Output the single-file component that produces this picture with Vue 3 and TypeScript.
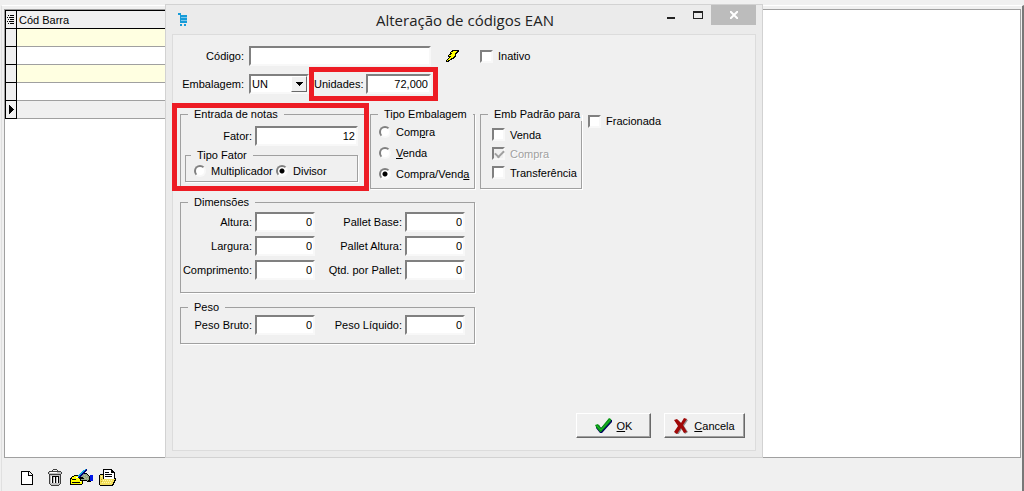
<script setup lang="ts">
import { ref } from 'vue'

const rows = [0, 1, 2, 3, 4]
const codigo = ref('')
const embalagem = ref('UN')
const unidades = ref('72,000')
const fator = ref('12')
const tipoFator = ref('divisor')
const tipoEmbalagem = ref('ambos')
const inativo = ref(false)
const fracionada = ref(false)
const padraoVenda = ref(false)
const padraoCompra = ref(true)
const padraoTransferencia = ref(false)

const dimensoes = ref([
  { id: 'altura', label: 'Altura:', value: '0' },
  { id: 'pallet-base', label: 'Pallet Base:', value: '0' },
  { id: 'largura', label: 'Largura:', value: '0' },
  { id: 'pallet-altura', label: 'Pallet Altura:', value: '0' },
  { id: 'comprimento', label: 'Comprimento:', value: '0' },
  { id: 'qtd-pallet', label: 'Qtd. por Pallet:', value: '0' },
])
const pesos = ref([
  { id: 'peso-bruto', label: 'Peso Bruto:', value: '0' },
  { id: 'peso-liquido', label: 'Peso Líquido:', value: '0' },
])
</script>

<template>
  <main class="screen">
    <section class="panel">
      <div class="grid-box">
        <table class="grid">
          <thead>
            <tr>
              <th class="marker">
                <svg width="10" height="12" viewBox="0 0 10 12" aria-hidden="true" shape-rendering="crispEdges">
                  <path fill="#000" d="M2 1h1v1H2zM4 1h4v1H4zM1 3h1v1H1zM3 3h5v1H3zM2 5h1v1H2zM4 5h4v1H4zM1 7h1v1H1zM3 7h5v1H3zM2 9h1v1H2zM4 9h4v1H4z" />
                </svg>
              </th>
              <th class="head">Cód Barra</th>
            </tr>
          </thead>
          <tbody>
            <tr v-for="r in rows" :key="r" :class="{ odd: r % 2 === 0, current: r === 4 }">
              <td class="marker">
                <svg v-if="r === 4" width="10" height="10" viewBox="0 0 10 10" aria-hidden="true" shape-rendering="crispEdges">
                  <path fill="#000" d="M3 0h1v1h1v1h1v1h1v1h1v1H7v1H6v1H5v1H4v1H3z" />
                </svg>
              </td>
              <td class="data"></td>
            </tr>
          </tbody>
        </table>
      </div>
      <nav class="toolbar">
        <button type="button" class="tool" aria-label="Novo">
          <svg width="12" height="14" viewBox="0 0 12 14" shape-rendering="crispEdges">
            <path fill="#fff" d="M1 1h7v3h3v9H1z" />
            <path fill="#000" d="M0 0h8v1H1v12h10V5H7V1h1v3h3V3h-1V2H9V1H8V0h1v1h1v1h1v1h1v11H0z" />
          </svg>
        </button>
        <button type="button" class="tool trash" aria-label="Excluir">
          <svg width="14" height="17" viewBox="0 0 14 17" shape-rendering="crispEdges">
            <path fill="#c0c0c0" d="M1 3h12v2H1zM2 6h10v10H2z" />
            <path fill="#404040" d="M5 0h4v1H5zM4 1h1v1H4zM9 1h1v1H9zM1 2h12v1H1zM0 3h1v2H0zM13 3h1v2h-1zM1 5h12v1H1zM1 6h1v9H1zM12 6h1v9h-1zM2 15h1v1H2zM11 15h1v1h-1zM3 16h8v1H3z" />
            <path fill="#000" d="M4 8h1v6H4zM7 8h1v6H7zM10 8h1v6h-1zM4 7h7v1H4z" />
            <path fill="#fff" d="M2 3h7v1H2zM3 7h1v7H3zM6 8h1v6H6zM9 8h1v6H9z" />
          </svg>
        </button>
        <button type="button" class="tool edit" aria-label="Alterar">
          <svg width="23" height="17" viewBox="0 0 23 17" shape-rendering="crispEdges">
            <path fill="#000" d="M4 6h10v6h-1v3h-1v1H0V9h1V8h1V7h2z" />
            <path fill="#ffff00" d="M4 7h8v4h1v1h-1v3H1v-5h1V8h2z" />
            <path fill="#000" d="M2 10h4v1H2zM2 13h8v1H2z" />
            <path fill="#fff" d="M6 8h3v1H6zM10 12h1v1h-1z" />
            <path fill="#000" d="M12 4h5v1h1v1h1v1h2v6h-4v-1h-7v-2H9V8h1V7h1V6h1z" />
            <path fill="#93a58a" d="M13 5h4v1h1v1h1v1h1v3h-2v1h-1v-1h-6v-1h3V9h-1V8h-2V7h1V6h1z" />
            <path fill="#b9c58e" d="M14 6h1v1h-1zM16 7h1v1h-1zM15 9h1v1h-1zM17 9h1v1h-1zM14 8h1v1h-1z" />
            <path fill="#000" d="M19 7h1v1h1v5h-1v-1h-1z" />
            <path fill="#0018e8" d="M20 6h3v6h-3z" />
            <path fill="#18a8e0" d="M15 0h1v1h-1v1h-1v1h-1v1h-1v1h-1v1h-1v1H9v1H8V6h1V5h1V4h1V3h1V2h1V1h2z" />
            <path fill="#000080" d="M16 0h1v2h-1v1h-1v1h-1v1h-1v1h-1v1h-1v1h-1v1H8V8h1V7h1V6h1V5h1V4h1V3h1V2h1V1h1z" />
          </svg>
        </button>
        <button type="button" class="tool open" aria-label="Abrir">
          <svg width="17" height="17" viewBox="0 0 17 17" shape-rendering="crispEdges">
            <path fill="#000" d="M4 0h9v1h1v1h1v1h1v6h1v3h-1v2h-1v2h-1v1H1v-1H0V6h1V5h3z" />
            <path fill="#fff" d="M5 1h7v3h3v6H5z" />
            <path fill="#000" d="M6 3h4v1H6zM6 5h7v1H6zM6 7h7v1H6zM12 1h1v2h2v1h-3z" />
            <path fill="#f3df5c" d="M1 6h3v4h12v1h-1v2h-1v2h-1v1H1z" />
            <path fill="#c8a820" d="M2 10h1v1H2zM2 12h1v1H2z" />
            <path fill="#fff8b0" d="M4 11h1v1H4zM6 11h1v1H6zM8 11h1v1H8zM10 11h1v1h-1zM12 11h1v1h-1zM3 13h1v1H3zM5 13h1v1H5zM7 13h1v1H7zM9 13h1v1H9zM11 13h1v1h-1zM2 7h1v1H2z" />
          </svg>
        </button>
      </nav>
    </section>

    <section class="dialog" role="dialog" aria-labelledby="dialog-title">
      <header class="titlebar">
        <svg class="app-icon" width="11" height="13" viewBox="0 0 11 13" aria-hidden="true">
          <path fill="#7cc8ec" d="M2 2h7v8H2z" />
          <path fill="#169bd8" d="M0 0h3v2h6v2H3v1h6v2H3v1h6v2H2V2H0zM2 11h2v2H2zM6 11h2v2H6z" />
        </svg>
        <h1 id="dialog-title">Alteração de códigos EAN</h1>
        <div class="win-buttons">
          <button type="button" aria-label="Minimizar">
            <svg width="10" height="10" viewBox="0 0 10 10" shape-rendering="crispEdges"><path fill="#222" d="M1 7h8v2H1z" /></svg>
          </button>
          <button type="button" aria-label="Maximizar">
            <svg width="10" height="10" viewBox="0 0 10 10" shape-rendering="crispEdges"><path fill="#222" fill-rule="evenodd" d="M0 1h10v8H0zM1 3v5h8V3z" /></svg>
          </button>
          <button type="button" class="close" aria-label="Fechar">
            <svg width="8" height="8" viewBox="0 0 8 8"><path stroke="#fff" stroke-width="2" d="M0 0l8 8M8 0L0 8" /></svg>
          </button>
        </div>
      </header>

      <form class="client" @submit.prevent>
        <div class="line">
          <label class="cap main-cap" for="codigo">Código:</label>
          <input id="codigo" v-model="codigo" class="box codigo" type="text" />
          <button type="button" class="tool bolt" aria-label="Gerar código">
            <svg width="13" height="12" viewBox="0 0 13 12" shape-rendering="crispEdges">
              <path fill="#000" d="M6 0h7v2h-1v1h-1v1h-1v3H9v1H8v1H6v1H4v1H3v1H0v-2h1V9h1V8h1V7H2V5h1V4h1V2h1V1h1z" />
              <path fill="#ffff00" d="M7 1h4v1h-1v1H9v3H8v1H7v1H5v1H4v1H2v1H1v-1h1V9h1V8h1V7h1V6H3V5h2V4h1V3H5V2h2z" />
            </svg>
          </button>
          <label class="choice"><input v-model="inativo" type="checkbox" />Inativo</label>
        </div>

        <div class="line">
          <label class="cap main-cap" for="embalagem">Embalagem:</label>
          <div class="combo">
            <select id="embalagem" v-model="embalagem" class="box"><option>UN</option></select>
            <span class="arrow" aria-hidden="true"><svg width="7" height="4" viewBox="0 0 7 4" shape-rendering="crispEdges"><path d="M0 0h7v1H6v1H5v1H4v1H3V3H2V2H1V1H0z" /></svg></span>
          </div>
          <div class="unidades marked">
            <label class="cap" for="unidades">Unidades:</label>
            <input id="unidades" v-model="unidades" class="box num" type="text" />
          </div>
        </div>

        <div class="groups">
          <div class="entrada marked">
            <fieldset>
              <legend>Entrada de notas</legend>
              <div class="fator">
                <label class="cap" for="fator">Fator:</label>
                <input id="fator" v-model="fator" class="box num" type="text" />
              </div>
              <fieldset class="tipo-fator">
                <legend>Tipo Fator</legend>
                <div class="pair">
                  <label class="choice"><input v-model="tipoFator" type="radio" name="tipo-fator" value="multiplicador" />Multiplicador</label>
                  <label class="choice"><input v-model="tipoFator" type="radio" name="tipo-fator" value="divisor" />Divisor</label>
                </div>
              </fieldset>
            </fieldset>
          </div>

          <fieldset class="tipo-emb">
            <legend>Tipo Embalagem</legend>
            <label class="choice"><input v-model="tipoEmbalagem" type="radio" name="tipo-emb" value="compra" /><span>Com<u>p</u>ra</span></label>
            <label class="choice"><input v-model="tipoEmbalagem" type="radio" name="tipo-emb" value="venda" /><span><u>V</u>enda</span></label>
            <label class="choice"><input v-model="tipoEmbalagem" type="radio" name="tipo-emb" value="ambos" /><span>Compra/Vend<u>a</u></span></label>
          </fieldset>

          <fieldset class="padrao">
            <legend>Emb Padrão para</legend>
            <label class="choice"><input v-model="padraoVenda" type="checkbox" />Venda</label>
            <label class="choice off"><input v-model="padraoCompra" type="checkbox" disabled />Compra</label>
            <label class="choice"><input v-model="padraoTransferencia" type="checkbox" />Transferência</label>
          </fieldset>

          <label class="choice fracionada"><input v-model="fracionada" type="checkbox" />Fracionada</label>
        </div>

        <fieldset class="measures dims">
          <legend>Dimensões</legend>
          <div class="fields">
            <template v-for="d in dimensoes" :key="d.id">
              <label class="cap" :for="d.id">{{ d.label }}</label>
              <input :id="d.id" v-model="d.value" class="box num" type="text" />
            </template>
          </div>
        </fieldset>

        <fieldset class="measures peso">
          <legend>Peso</legend>
          <div class="fields">
            <template v-for="p in pesos" :key="p.id">
              <label class="cap" :for="p.id">{{ p.label }}</label>
              <input :id="p.id" v-model="p.value" class="box num" type="text" />
            </template>
          </div>
        </fieldset>

        <footer class="actions">
          <button type="submit" class="push ok">
            <svg width="17" height="16" viewBox="0 0 17 16" aria-hidden="true">
              <path fill="#000060" d="M1 8l3-1 2 3 8-9 3 1v2L7 15H5L1 10z" />
              <path fill="#0a9a14" d="M0 7l3-1 3 4 8-10 2 1v2L6 14H5L1 9z" />
              <path fill="none" stroke="#22b42c" d="M2 8l4 4 9-10" />
            </svg>
            <span><u>O</u>K</span>
          </button>
          <button type="button" class="push cancel">
            <svg width="14" height="16" viewBox="0 0 14 16" aria-hidden="true">
              <path fill="#909090" d="M1 3l3-1 4 4 3-5 3 1-4 6 4 6-3 2-3-5-4 6-3-2 4-6z" />
              <path fill="#a00808" d="M0 2l3-1 4 4 3-5 3 1-4 6 4 7-3 1-3-5-4 6-3-2 4-6z" />
            </svg>
            <span><u>C</u>ancela</span>
          </button>
        </footer>
      </form>
    </section>
  </main>
</template>

<style>
html,
body {
  background: #f0f0f0;
}
</style>

<style scoped>
* {
  box-sizing: border-box;
}
.screen {
  position: relative;
  display: flex;
  min-height: 100vh;
  padding: 5px 0 0 1px;
  background: #f0f0f0;
  color: #000;
  font-family: "Liberation Sans", Arial, sans-serif;
  font-size: 11px;
  line-height: 14px;
}
.panel {
  display: flex;
  flex: 1;
  flex-direction: column;
  padding: 3px 1px 0 2px;
  border-top: 1px solid #fff;
  border-left: 1px solid #e0e0e0;
  border-right: 2px solid #787878;
}
.grid-box {
  flex: 1;
  border: 1px solid #a0a0a0;
  background: #fff;
}
.grid {
  width: 45%;
  border-spacing: 0;
  table-layout: fixed;
}
.grid th,
.grid td {
  height: 18px;
  padding: 0;
  border-bottom: 1px solid #a0a0a0;
  font-weight: normal;
  text-align: left;
}
.grid th {
  height: 19px;
  border-top: 1px solid #000;
  border-bottom-color: #000;
  background: #f0f0f0;
}
.grid .marker {
  width: 12px;
  border-right: 1px solid #000;
  border-left: 1px solid #000;
  border-bottom-color: #000;
  background: #f0f0f0;
}
.grid .head {
  padding-left: 2px;
}
.marker svg {
  display: block;
}
.odd .data {
  background: #ffffe1;
}
.current .data {
  background: #f0f0f0;
}
.toolbar {
  display: flex;
  align-items: center;
  height: 33px;
  padding: 6px 0 0 17px;
}
.tool {
  display: block;
  padding: 0;
  border: 0;
  background: none;
}
.tool svg {
  display: block;
}
.trash {
  margin-left: 15px;
}
.edit {
  margin-left: 8px;
}
.open {
  margin-left: 6px;
}

.dialog {
  position: absolute;
  top: 4px;
  left: 165px;
  display: flex;
  flex-direction: column;
  width: 598px;
  min-height: 454px;
  padding: 0 6px 6px;
  border: 1px solid #d2d2d2;
  background: #ebebeb;
}
.titlebar {
  display: flex;
  align-items: flex-start;
  justify-content: space-between;
  height: 29px;
}
.app-icon {
  flex: none;
  margin: 8px 0 0 6px;
}
.titlebar h1 {
  flex: 1;
  margin: 4px 0 0 187px;
  color: #222;
  font: 400 15px/22px "Open Sans", "Noto Sans", sans-serif;
  white-space: nowrap;
}
.win-buttons {
  display: flex;
}
.win-buttons button {
  display: flex;
  align-items: center;
  justify-content: center;
  width: 27px;
  height: 20px;
  padding: 0;
  border: 0;
  background: none;
}
.win-buttons .close {
  width: 45px;
  background: #bcbcbc;
}
.client {
  display: flex;
  flex: 1;
  flex-direction: column;
  padding: 11px 10px 12px 7px;
  border: 1px solid #dcdcdc;
  background: #f0f0f0;
}
.line {
  display: flex;
  align-items: center;
  height: 20px;
  margin-bottom: 8px;
}
.cap {
  text-align: right;
  white-space: nowrap;
}
.main-cap {
  width: 64px;
  margin-right: 5px;
}
.box {
  width: 60px;
  height: 20px;
  margin: 0;
  padding: 0 1px;
  border: 2px solid;
  border-color: #808080 #f8f8f8 #f8f8f8 #808080;
  border-radius: 0;
  outline: 0;
  background: #fff;
  color: #000;
  font: inherit;
  appearance: none;
}
.num {
  text-align: right;
}
.codigo {
  width: 182px;
}
.bolt {
  margin: 0 21px 0 15px;
}
.combo {
  position: relative;
}
.arrow {
  position: absolute;
  top: 2px;
  right: 2px;
  display: flex;
  align-items: center;
  justify-content: center;
  width: 16px;
  height: 16px;
  border: 1px solid;
  border-color: #fff #696969 #696969 #fff;
  background: #f0f0f0;
  pointer-events: none;
}
.marked {
  position: relative;
}
.marked::after {
  position: absolute;
  border: 5px solid #ed1c24;
  content: "";
  pointer-events: none;
}
.unidades {
  display: flex;
  align-items: center;
  justify-content: space-between;
  width: 117px;
  margin-left: 5px;
}
.unidades .box {
  width: 65px;
}
.unidades::after {
  inset: -7px -7px -7px -5px;
}
.choice {
  display: flex;
  align-items: center;
  gap: 5px;
  white-space: nowrap;
}
.choice input {
  flex: none;
  width: 13px;
  height: 13px;
  margin: 0;
  border: 2px solid;
  border-color: #808080 #f8f8f8 #f8f8f8 #808080;
  background: #fff;
  appearance: none;
}
.choice input[type="radio"] {
  width: 12px;
  height: 12px;
  border-radius: 50%;
}
.choice input[type="radio"]:checked {
  background: radial-gradient(circle, #000 2px, #fff 3px);
}
.choice input:disabled {
  background: #f0f0f0;
}
.choice input:checked:disabled::before {
  display: block;
  width: 7px;
  height: 4px;
  border: 2px solid #a0a0a0;
  border-top: 0;
  border-right: 0;
  content: "";
  transform: translate(1px, 1px) rotate(-45deg);
}
.off {
  color: #a0a0a0;
  text-shadow: 1px 1px 0 #fff;
}
fieldset {
  min-width: 0;
  margin: 0;
  padding: 0;
  border: 1px solid #a0a0a0;
  box-shadow: 1px 1px 0 #fff;
}
legend {
  height: 14px;
  margin-left: 7px;
  padding: 0 6px;
  background: #f0f0f0;
  white-space: nowrap;
}
.groups {
  display: flex;
  align-items: flex-start;
  gap: 5px;
  margin-top: 5px;
}
.groups > fieldset {
  height: 82px;
}
.entrada {
  width: 185px;
}
.entrada::after {
  inset: -4px -4px -3px -8px;
}
.entrada > fieldset {
  height: 81px;
  padding: 0 6px 0 4px;
}
.entrada > fieldset > legend {
  margin-left: 3px;
}
.fator {
  display: flex;
  align-items: center;
  justify-content: flex-end;
  gap: 3px;
  margin: 5px 0 2px;
}
.fator .box {
  width: 103px;
}
.tipo-fator {
  height: 34px;
}
.tipo-fator legend {
  margin-left: 5px;
}
.pair {
  display: grid;
  grid-template-columns: 82px auto;
  padding: 2px 0 0 8px;
}
.tipo-emb {
  width: 105px;
  padding-left: 8px;
}
.tipo-emb legend {
  margin-left: -1px;
}
.tipo-emb .choice {
  height: 21px;
}
.padrao {
  width: 102px;
  padding-left: 11px;
}
.padrao legend {
  margin-left: -4px;
  padding-right: 2px;
}
.padrao .choice {
  height: 19px;
}
.padrao legend + .choice {
  margin-top: 4px;
}
.fracionada {
  margin: 7px 0 0 1px;
}
.measures {
  width: 295px;
}
.dims {
  height: 98px;
  margin-top: 6px;
}
.peso {
  height: 44px;
  margin-top: 7px;
}
.fields {
  display: grid;
  grid-template-columns: 71px 60px 84px 60px;
  align-items: center;
  gap: 4px 3px;
}
.dims .fields {
  margin-top: 3px;
}
.peso .fields {
  margin-top: 1px;
}
.actions {
  display: flex;
  justify-content: flex-end;
  gap: 13px;
  margin-top: auto;
}
.push {
  display: flex;
  align-items: center;
  justify-content: center;
  height: 25px;
  padding: 0;
  border: 1px solid;
  border-color: #fff #696969 #696969 #fff;
  box-shadow: inset -1px -1px 0 #a0a0a0;
  background: #f0f0f0;
  color: #000;
  font: inherit;
}
.ok {
  gap: 5px;
  width: 75px;
}
.cancel {
  gap: 6px;
  width: 81px;
}
</style>
